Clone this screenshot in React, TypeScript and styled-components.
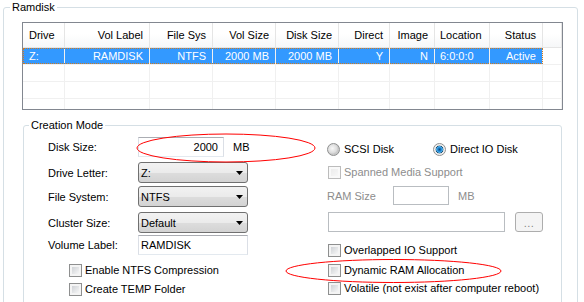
import styled, { createGlobalStyle } from 'styled-components';

const GlobalStyle = createGlobalStyle`
  html, body {
    margin: 0;
    padding: 0;
    background: #ffffff;
  }
  body {
    font-family: 'Liberation Sans', Arial, sans-serif;
    font-size: 11px;
    color: #000000;
  }
`;

const Window = styled.div`
  position: relative;
  width: 584px;
  height: 302px;
  overflow: hidden;
  box-sizing: border-box;
  padding-left: 3px;
`;

const Group = styled.fieldset<{ $width: number; $mt?: number; $ml?: number }>`
  box-sizing: border-box;
  width: ${p => p.$width}px;
  min-width: 0;
  margin: ${p => p.$mt ?? 0}px 0 0 ${p => p.$ml ?? 0}px;
  padding: 0;
  border: 1px solid #d5dfe5;
  border-radius: 3px;
`;

const Legend = styled.legend<{ $indent: number }>`
  margin-left: ${p => p.$indent}px;
  padding: 0 2px;
  line-height: 14px;
`;

const GroupBody = styled.div<{ $pad: string }>`
  padding: ${p => p.$pad};
`;

// list view
const COLUMNS = '42px 85px 63px 63px 63px 51px 45px 55px 53px 1fr';

const ListView = styled.div`
  box-sizing: border-box;
  width: 541px;
  height: 88px;
  border: 1px solid #828790;
  background: #ffffff;
  overflow: hidden;
`;

const HeaderRow = styled.div`
  display: grid;
  grid-template-columns: ${COLUMNS};
  height: 24px;
  border-bottom: 1px solid #e5e5e5;
  background: linear-gradient(#ffffff 0%, #ffffff 45%, #f6f7f8 100%);
`;

const HeaderCell = styled.div<{ $align: 'left' | 'right'; $pad?: number }>`
  display: flex;
  align-items: center;
  justify-content: ${p => (p.$align === 'left' ? 'flex-start' : 'flex-end')};
  padding: 0 6px 0 ${p => p.$pad ?? 6}px;
  border-right: 1px solid #e5e5e5;
  white-space: nowrap;
  overflow: hidden;
`;

const DataRow = styled.div`
  position: relative;
  display: grid;
  grid-template-columns: ${COLUMNS};
  height: 17px;
`;

const DataCell = styled.div<{ $align: 'left' | 'right'; $pad?: number; $selected?: boolean }>`
  display: flex;
  align-items: center;
  justify-content: ${p => (p.$align === 'left' ? 'flex-start' : 'flex-end')};
  padding: 0 6px 0 ${p => p.$pad ?? 6}px;
  border-right: 1px solid #f0f0f0;
  border-bottom: 1px solid #f0f0f0;
  background: ${p => (p.$selected ? '#3399ff' : 'transparent')};
  color: ${p => (p.$selected ? '#ffffff' : '#000000')};
  white-space: nowrap;
  overflow: hidden;
`;

const FocusFrame = styled.div`
  position: absolute;
  left: 0;
  top: 0;
  width: 520px;
  height: 16px;
  box-sizing: border-box;
  border: 1px dotted #d07a20;
  pointer-events: none;
`;

// creation mode form
const FormGrid = styled.div`
  display: grid;
  grid-template-columns: 279px 1fr;
  padding: 0 19px 30px 24px;
`;

const Column = styled.div`
  display: flex;
  flex-direction: column;
`;

const FieldRow = styled.div<{ $mt: number; $h: number; $indent?: number }>`
  display: flex;
  align-items: center;
  height: ${p => p.$h}px;
  margin-top: ${p => p.$mt}px;
  padding-left: ${p => p.$indent ?? 0}px;
`;

const FieldLabel = styled.span<{ $w?: number; $disabled?: boolean }>`
  flex-shrink: 0;
  width: ${p => (p.$w ? `${p.$w}px` : 'auto')};
  color: ${p => (p.$disabled ? '#8d8d8d' : '#000000')};
  white-space: nowrap;
`;

const Unit = styled.span<{ $gap: number; $disabled?: boolean }>`
  margin-left: ${p => p.$gap}px;
  color: ${p => (p.$disabled ? '#8d8d8d' : '#000000')};
`;

const TextBox = styled.div<{ $w: number; $h: number; $align?: 'left' | 'right'; $disabled?: boolean }>`
  box-sizing: border-box;
  width: ${p => p.$w}px;
  height: ${p => p.$h}px;
  display: flex;
  align-items: center;
  justify-content: ${p => (p.$align === 'right' ? 'flex-end' : 'flex-start')};
  padding: 0 5px 0 2px;
  background: #ffffff;
  border: 1px solid ${p => (p.$disabled ? '#b9bdc1' : '#dbdfe6')};
  border-top-color: ${p => (p.$disabled ? '#b9bdc1' : '#abadb3')};
  border-bottom-color: ${p => (p.$disabled ? '#b9bdc1' : '#e3e9ef')};
`;

const Combo = styled.div`
  box-sizing: border-box;
  width: 110px;
  height: 21px;
  display: flex;
  align-items: center;
  justify-content: space-between;
  padding: 0 4px 0 2px;
  border: 1px solid #707070;
  border-radius: 3px;
  background: linear-gradient(#f2f2f2 0%, #ebebeb 50%, #dddddd 51%, #d3d3d3 100%);
`;

const ComboArrow = styled.svg`
  width: 7px;
  height: 4px;
`;

const Box = styled.span<{ $disabled?: boolean }>`
  box-sizing: border-box;
  flex-shrink: 0;
  width: 13px;
  height: 13px;
  padding: 2px;
  border: 1px solid ${p => (p.$disabled ? '#bcbcbc' : '#8e8f8f')};
  background: ${p =>
    p.$disabled
      ? 'linear-gradient(135deg, #ececec, #f7f7f7) content-box, #f9f9f9'
      : 'linear-gradient(135deg, #cfd2d6, #f6f6f6) content-box, #f4f4f4'};
`;

const Radio = styled.span<{ $checked?: boolean }>`
  box-sizing: border-box;
  flex-shrink: 0;
  width: 13px;
  height: 13px;
  border-radius: 50%;
  border: 1px solid #8e8f8f;
  background: ${p =>
    p.$checked
      ? 'radial-gradient(circle, #0b4a7e 0, #1a7ccb 1.6px, #4fb3ee 3px, #1e4f74 3.6px, #e6e6e6 4.2px, #f6f6f6 5.5px)'
      : 'radial-gradient(circle at 40% 40%, #f8f8f8 0, #dcdcdc 4.5px, #c9c9c9 5.5px)'};
`;

const Option = styled.label<{ $w?: number; $disabled?: boolean; $gap?: number }>`
  display: flex;
  align-items: center;
  gap: ${p => p.$gap ?? 3}px;
  width: ${p => (p.$w ? `${p.$w}px` : 'auto')};
  color: ${p => (p.$disabled ? '#8d8d8d' : '#000000')};
  white-space: nowrap;
`;

const BrowseButton = styled.div`
  box-sizing: border-box;
  width: 28px;
  height: 20px;
  margin-left: 10px;
  display: flex;
  align-items: center;
  justify-content: center;
  padding-top: 2px;
  border: 1px solid #adadad;
  border-radius: 3px;
  background: #f4f4f4;
  color: #838383;
  letter-spacing: 0.5px;
`;

const Annotations = styled.svg`
  position: absolute;
  left: 0;
  top: 0;
  width: 584px;
  height: 302px;
  pointer-events: none;
`;

type Align = 'left' | 'right';

const columns: { title: string; align: Align; pad?: number }[] = [
  { title: 'Drive', align: 'left' },
  { title: 'Vol Label', align: 'right' },
  { title: 'File Sys', align: 'right' },
  { title: 'Vol Size', align: 'right' },
  { title: 'Disk Size', align: 'right' },
  { title: 'Direct', align: 'right' },
  { title: 'Image', align: 'right' },
  { title: 'Location', align: 'left', pad: 5 },
  { title: 'Status', align: 'right' },
];

const disk = ['Z:', 'RAMDISK', 'NTFS', '2000 MB', '2000 MB', 'Y', 'N', '6:0:0:0', 'Active'];

function Arrow() {
  return (
    <ComboArrow viewBox="0 0 7 4">
      <polygon points="0,0 7,0 3.5,4" fill="#000" />
    </ComboArrow>
  );
}

export default function App() {
  return (
    <>
      <GlobalStyle />
      <Window>
        <Group $width={575}>
          <Legend $indent={6}>Ramdisk</Legend>
          <GroupBody $pad="8px 14px 10px 18px">
            <ListView>
              <HeaderRow>
                {columns.map(c => (
                  <HeaderCell key={c.title} $align={c.align} $pad={c.pad}>
                    {c.title}
                  </HeaderCell>
                ))}
                <HeaderCell $align="left" />
              </HeaderRow>
              <DataRow>
                {columns.map((c, i) => (
                  <DataCell key={c.title} $align={c.align} $pad={c.pad} $selected>
                    {disk[i]}
                  </DataCell>
                ))}
                <DataCell $align="left" />
                <FocusFrame />
              </DataRow>
              {[0, 1, 2].map(r => (
                <DataRow key={r}>
                  {columns.map(c => (
                    <DataCell key={c.title} $align={c.align} />
                  ))}
                  <DataCell $align="left" />
                </DataRow>
              ))}
            </ListView>

            <Group $width={539} $mt={8} $ml={1}>
              <Legend $indent={5}>Creation Mode</Legend>
              <FormGrid>
                <Column>
                  <FieldRow $mt={5} $h={20}>
                    <FieldLabel $w={90}>Disk Size:</FieldLabel>
                    <TextBox $w={86} $h={20} $align="right">2000</TextBox>
                    <Unit $gap={9}>MB</Unit>
                  </FieldRow>
                  <FieldRow $mt={5} $h={21}>
                    <FieldLabel $w={90}>Drive Letter:</FieldLabel>
                    <Combo>
                      Z:
                      <Arrow />
                    </Combo>
                  </FieldRow>
                  <FieldRow $mt={3} $h={21}>
                    <FieldLabel $w={90}>File System:</FieldLabel>
                    <Combo>
                      NTFS
                      <Arrow />
                    </Combo>
                  </FieldRow>
                  <FieldRow $mt={5} $h={21}>
                    <FieldLabel $w={90}>Cluster Size:</FieldLabel>
                    <Combo>
                      Default
                      <Arrow />
                    </Combo>
                  </FieldRow>
                  <FieldRow $mt={2} $h={20}>
                    <FieldLabel $w={90}>Volume Label:</FieldLabel>
                    <TextBox $w={110} $h={20}>RAMDISK</TextBox>
                  </FieldRow>
                  <FieldRow $mt={6} $h={18} $indent={21}>
                    <Option>
                      <Box />
                      Enable NTFS Compression
                    </Option>
                  </FieldRow>
                  <FieldRow $mt={1} $h={18} $indent={21}>
                    <Option>
                      <Box />
                      Create TEMP Folder
                    </Option>
                  </FieldRow>
                </Column>

                <Column>
                  <FieldRow $mt={8} $h={18}>
                    <Option $w={106} $gap={4}>
                      <Radio />
                      SCSI Disk
                    </Option>
                    <Option $gap={4}>
                      <Radio $checked />
                      Direct IO Disk
                    </Option>
                  </FieldRow>
                  <FieldRow $mt={5} $h={18} $indent={1}>
                    <Option $disabled>
                      <Box $disabled />
                      Spanned Media Support
                    </Option>
                  </FieldRow>
                  <FieldRow $mt={5} $h={19}>
                    <FieldLabel $w={66} $disabled>
                      RAM Size
                    </FieldLabel>
                    <TextBox $w={56} $h={19} $disabled />
                    <Unit $gap={9} $disabled>
                      MB
                    </Unit>
                  </FieldRow>
                  <FieldRow $mt={7} $h={20} $indent={1}>
                    <TextBox $w={177} $h={20} $disabled />
                    <BrowseButton>...</BrowseButton>
                  </FieldRow>
                  <FieldRow $mt={9} $h={18} $indent={1}>
                    <Option>
                      <Box />
                      Overlapped IO Support
                    </Option>
                  </FieldRow>
                  <FieldRow $mt={2} $h={18} $indent={1}>
                    <Option>
                      <Box />
                      Dynamic RAM Allocation
                    </Option>
                  </FieldRow>
                  <FieldRow $mt={0} $h={18} $indent={1}>
                    <Option>
                      <Box />
                      Volatile (not exist after computer reboot)
                    </Option>
                  </FieldRow>
                </Column>
              </FormGrid>
            </Group>
          </GroupBody>
        </Group>

        <Annotations viewBox="0 0 584 302">
          <ellipse cx="226" cy="148" rx="89" ry="14" fill="none" stroke="#ff0000" strokeWidth="1" />
          <ellipse cx="393.5" cy="271" rx="107.5" ry="11.5" fill="none" stroke="#ff0000" strokeWidth="1" />
        </Annotations>
      </Window>
    </>
  );
}
